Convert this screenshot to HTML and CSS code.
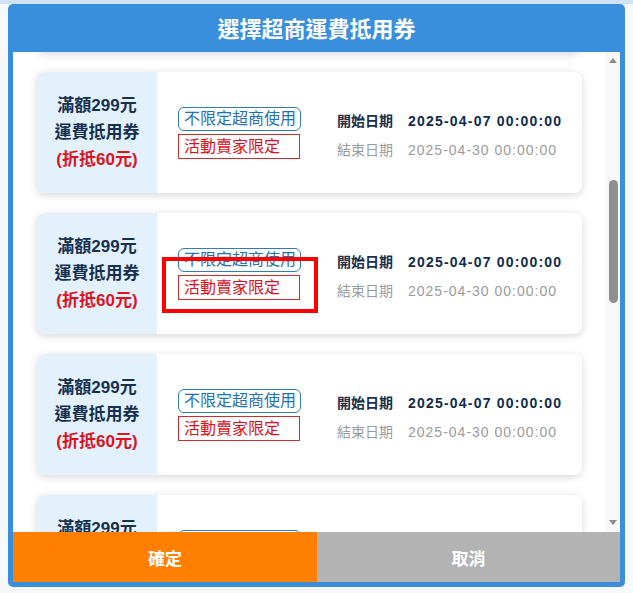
FILE: index.html
```html
<!DOCTYPE html>
<html lang="zh-Hant">
<head>
<meta charset="utf-8">
<title>選擇超商運費抵用券</title>
<link rel="stylesheet" href="styles.css">
</head>
<body>
<div class="modal">
  <div class="modal-header">選擇超商運費抵用券</div>
  <div class="modal-body">
    <div class="coupon-list" id="couponList">
      <div class="coupon"><div class="coupon-side"><div class="amt">滿額<b>299</b>元</div><div class="kind">運費抵用券</div><div class="disc">(折抵<b>60</b>元)</div></div><div class="coupon-tags"><span class="tag tag-blue">不限定超商使用</span><span class="tag tag-red">活動賣家限定</span></div><div class="coupon-dates"><div class="row start"><span class="lbl">開始日期</span><span class="val">2025-04-07 00:00:00</span></div><div class="row end"><span class="lbl">結束日期</span><span class="val">2025-04-30 00:00:00</span></div></div></div>
      <div class="coupon"><div class="coupon-side"><div class="amt">滿額<b>299</b>元</div><div class="kind">運費抵用券</div><div class="disc">(折抵<b>60</b>元)</div></div><div class="coupon-tags"><span class="tag tag-blue">不限定超商使用</span><span class="tag tag-red">活動賣家限定</span></div><div class="coupon-dates"><div class="row start"><span class="lbl">開始日期</span><span class="val">2025-04-07 00:00:00</span></div><div class="row end"><span class="lbl">結束日期</span><span class="val">2025-04-30 00:00:00</span></div></div></div>
      <div class="coupon"><div class="coupon-side"><div class="amt">滿額<b>299</b>元</div><div class="kind">運費抵用券</div><div class="disc">(折抵<b>60</b>元)</div></div><div class="coupon-tags"><span class="tag tag-blue">不限定超商使用</span><span class="tag tag-red">活動賣家限定</span></div><div class="coupon-dates"><div class="row start"><span class="lbl">開始日期</span><span class="val">2025-04-07 00:00:00</span></div><div class="row end"><span class="lbl">結束日期</span><span class="val">2025-04-30 00:00:00</span></div></div></div>
      <div class="coupon"><div class="coupon-side"><div class="amt">滿額<b>299</b>元</div><div class="kind">運費抵用券</div><div class="disc">(折抵<b>60</b>元)</div></div><div class="coupon-tags"><span class="tag tag-blue">不限定超商使用</span><span class="tag tag-red">活動賣家限定</span></div><div class="coupon-dates"><div class="row start"><span class="lbl">開始日期</span><span class="val">2025-04-07 00:00:00</span></div><div class="row end"><span class="lbl">結束日期</span><span class="val">2025-04-30 00:00:00</span></div></div></div>
      <div class="coupon"><div class="coupon-side"><div class="amt">滿額<b>299</b>元</div><div class="kind">運費抵用券</div><div class="disc">(折抵<b>60</b>元)</div></div><div class="coupon-tags"><span class="tag tag-blue">不限定超商使用</span><span class="tag tag-red">活動賣家限定</span></div><div class="coupon-dates"><div class="row start"><span class="lbl">開始日期</span><span class="val">2025-04-07 00:00:00</span></div><div class="row end"><span class="lbl">結束日期</span><span class="val">2025-04-30 00:00:00</span></div></div></div>
    </div>
    <div class="scrollbar" aria-hidden="true">
      <div class="sb-btn"><span class="arrow-up"></span></div>
      <div class="sb-track"><div class="sb-thumb"></div></div>
      <div class="sb-btn"><span class="arrow-down"></span></div>
    </div>
  </div>
  <div class="modal-footer">
    <button class="btn btn-ok">確定</button>
    <button class="btn btn-cancel">取消</button>
  </div>
</div>
<div class="highlight"></div>
<script src="script.js"></script>
</body>
</html>
```
FILE: styles.css
```css
html, body {
  margin: 0;
  padding: 0;
}
body {
  width: 633px;
  height: 593px;
  overflow: hidden;
  background: linear-gradient(#cfe3f5 0 4px, #f7f8fa 4px);
  font-family: "Liberation Sans", "Noto Sans CJK TC", sans-serif;
  position: relative;
}
.modal {
  margin: 4px 0 0 8px;
  width: 617px;
  box-sizing: border-box;
  background: #3a8fdc;
  border-radius: 5px;
  padding: 0 5px 5px;
  display: flex;
  flex-direction: column;
}
.modal-header {
  height: 48px;
  display: flex;
  align-items: center;
  justify-content: center;
  color: #fff;
  font-size: 22px;
  font-weight: bold;
  padding-bottom: 2px;
  box-sizing: border-box;
}
.modal-body {
  height: 480px;
  background: #fff;
  display: flex;
}
.coupon-list {
  flex: 1;
  overflow: hidden;
  padding: 20px 23px 20px 24px;
  display: flex;
  flex-direction: column;
  gap: 20px;
}
.scrollbar {
  flex: none;
  width: 15px;
  background: #f8f8f8;
  display: flex;
  flex-direction: column;
  align-items: center;
}
.sb-btn {
  height: 15px;
  width: 15px;
  display: flex;
  align-items: center;
  justify-content: center;
}
.arrow-up {
  width: 0;
  height: 0;
  border-left: 4.5px solid transparent;
  border-right: 4.5px solid transparent;
  border-bottom: 5px solid #8c8c8c;
  margin-top: 2px;
}
.arrow-down {
  width: 0;
  height: 0;
  border-left: 4.5px solid transparent;
  border-right: 4.5px solid transparent;
  border-top: 5px solid #8c8c8c;
  margin-top: -5px;
}
.sb-track {
  flex: 1;
  display: flex;
  flex-direction: column;
  align-items: center;
  padding-left: 1px;
}
.sb-thumb {
  margin-top: 113px;
  width: 9px;
  height: 123px;
  border-radius: 5px;
  background: #8f8f8f;
}
.coupon {
  flex: none;
  height: 121px;
  display: flex;
  align-items: center;
  background: #fff;
  border-radius: 8px;
  box-shadow: 0 2px 8px rgba(0, 0, 0, 0.16);
  overflow: hidden;
}
.coupon-side {
  width: 120px;
  height: 100%;
  background: #e3f1fc;
  display: flex;
  flex-direction: column;
  align-items: center;
  justify-content: center;
  font-size: 17px;
  font-weight: bold;
  line-height: 27px;
  color: #17304f;
}
.coupon-side b {
  font-weight: bold;
}
.coupon-side .disc {
  color: #e0121c;
}
.coupon-tags {
  margin-left: 21px;
  display: flex;
  flex-direction: column;
  gap: 3px;
  width: 123px;
}
.tag {
  display: block;
  font-size: 16px;
  line-height: 20px;
  padding: 1px 5px;
  white-space: nowrap;
}
.tag-blue {
  color: #1f70b4;
  border: 1px solid #2f7cb8;
  border-radius: 6px;
}
.tag-red {
  color: #e0101a;
  border: 1px solid #d32a2e;
  margin-right: 1px;
  line-height: 21px;
}
.coupon-dates {
  margin-left: 36px;
  padding-top: 6px;
  display: flex;
  flex-direction: column;
  gap: 1px;
  font-size: 14px;
  line-height: 28px;
}
.row {
  display: flex;
  white-space: nowrap;
}
.lbl {
  width: 71px;
  flex: none;
}
.val {
  letter-spacing: 1px;
}
.start {
  color: #0f2b4d;
  font-weight: bold;
}
.start .val {
  letter-spacing: 1.2px;
}
.start .lbl {
  color: #1d3049;
}
.end {
  color: #9b9b9b;
}
.modal-footer {
  display: grid;
  grid-template-columns: 304px 1fr;
  height: 50px;
}
.btn {
  border: 0;
  margin: 0;
  padding: 0;
  font-family: "Liberation Sans", "Noto Sans CJK TC", sans-serif;
  font-size: 17px;
  font-weight: bold;
  color: #fff;
}
.btn-ok {
  background: #ff8000;
}
.btn-cancel {
  background: #b3b3b3;
}
.highlight {
  position: absolute;
  left: 162px;
  top: 257px;
  width: 156px;
  height: 56px;
  box-sizing: border-box;
  border: 4px solid #ff0000;
  pointer-events: none;
}
```
FILE: script.js
```js
document.getElementById('couponList').scrollTop = 141;
```
